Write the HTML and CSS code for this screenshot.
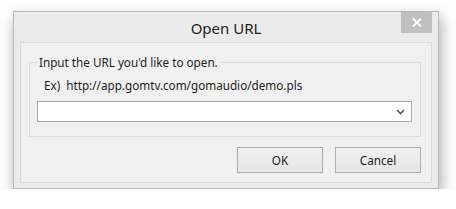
FILE: index.html
```html
<!DOCTYPE html>
<html lang="en">
<head>
<meta charset="UTF-8" />
<title>Open URL</title>
<link rel="stylesheet" href="styles.css">
</head>
<body>
  <div class="window">
    <div class="titlebar">
      <span></span>
      <span class="title">Open URL</span>
      <button class="close" type="button" aria-label="Close">
        <svg width="10" height="9" viewBox="0 0 10 9"><path d="M1 0.5 L9 8.5 M9 0.5 L1 8.5" stroke="#fff" stroke-width="1.8" fill="none"/></svg>
      </button>
    </div>

    <form class="client" onsubmit="return false">
      <fieldset class="group">
        <legend>Input the URL you'd like to open.</legend>
        <p class="hint">Ex)&nbsp; http://app.gomtv.com/gomaudio/demo.pls</p>
        <div class="combo">
          <input type="text" name="url" />
          <svg class="chevron" width="9" height="6" viewBox="0 0 9 6"><path d="M1 1 L4.5 4.5 L8 1" stroke="#555" stroke-width="1.6" fill="none"/></svg>
        </div>
      </fieldset>

      <div class="buttons">
        <button type="submit" class="btn">OK</button>
        <button type="button" class="btn">Cancel</button>
      </div>
    </form>
  </div>
</body>
</html>
```

FILE: styles.css
```css
* {
  box-sizing: border-box;
}
body {
  margin: 0;
  background: #fff;
  font-family: "Noto Sans", "Open Sans", sans-serif;
  font-size: 11.7px;
  color: #1e1e1e;
}

.window {
  margin: 11px 0 0 13px;
  width: 426px;
  height: 178px;
  background: #ebebeb;
  border: 1px solid #b9b9b9;
  box-shadow: 2px 6px 14px rgba(0,0,0,0.35);
  padding: 0 6px 5px 6px;
  display: flex;
  flex-direction: column;
}

.titlebar {
  height: 30px;
  display: grid;
  grid-template-columns: 1fr auto 1fr;
}
.titlebar .title {
  font-size: 15px;
  color: #222;
  line-height: 32px;
}
.close {
  justify-self: end;
  align-self: start;
  width: 31px;
  height: 21px;
  margin: 0;
  border: none;
  background: #c0c0c0;
  display: flex;
  align-items: center;
  justify-content: center;
  padding: 0;
}

.client {
  flex: 1;
  margin: 0;
  background: #f0f0f0;
  border: 1px solid #d9d9d9;
  padding: 12px 10px 0 8px;
  display: flex;
  flex-direction: column;
}

.group {
  margin: 0;
  padding: 0 0 11px 7px;
  border: 1px solid #dcdcdc;
  height: 82px;
}
.group legend {
  padding: 0 2px;
  margin-left: 0;
  line-height: 14px;
}
.hint {
  margin: 8px 0 0 7px;
  line-height: 16px;
}
.combo {
  position: relative;
  margin-top: 8px;
  width: 375px;
  height: 21px;
}
.combo input {
  width: 100%;
  height: 100%;
  border: 1px solid #acacac;
  background: #fff;
  margin: 0;
  padding: 0 20px 0 3px;
  font: inherit;
  outline: none;
}
.chevron {
  position: absolute;
  right: 7px;
  top: 8px;
}

.buttons {
  margin-top: 10px;
  display: flex;
  justify-content: flex-end;
  gap: 12px;
}
.btn {
  width: 86px;
  height: 26px;
  margin: 0;
  border: 1px solid #acacac;
  background: linear-gradient(#f0f0f0, #e5e5e5);
  font: inherit;
  color: #1e1e1e;
  padding: 0;
}
```
